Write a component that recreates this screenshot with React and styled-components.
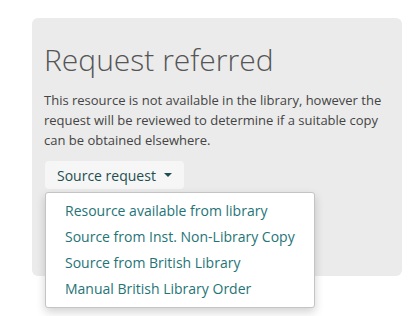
import React from 'react';
import styled, { createGlobalStyle } from 'styled-components';

const OPTIONS = [
  'Resource available from library',
  'Source from Inst. Non-Library Copy',
  'Source from British Library',
  'Manual British Library Order'
];

const GlobalStyle = createGlobalStyle`
  html, body {
    margin: 0;
    background: #fff;
    font-family: "Open Sans", "Liberation Sans", sans-serif;
  }
`;

function App() {
  return (
    <>
      <GlobalStyle />
      <Page>
        <Panel>
          <Title>Request referred</Title>
          <Lead>
            This resource is not available in the library, however the request will be
            reviewed to determine if a suitable copy can be obtained elsewhere.
          </Lead>
          <Dropdown>
            <Toggle type="button">
              Source request
              <Caret />
            </Toggle>
            <Menu>
              { OPTIONS.map((label, idx) => (
                <MenuItem key={ `opt-${ idx }` } href="#">{ label }</MenuItem>
              )) }
            </Menu>
          </Dropdown>
        </Panel>
      </Page>
    </>
  );
}

const Page = styled.main`
  min-height: 316px;
  box-sizing: border-box;
  padding: 18px 10px 0 32px;
`;

const Panel = styled.section`
  width: 370px;
  height: 258px;
  box-sizing: border-box;
  padding: 20px 12px 0 12px;
  background: #ebebeb;
  border-radius: 6px;
`;

const Title = styled.h1`
  margin: 0;
  font-size: 30px;
  font-weight: 300;
  line-height: 44px;
  color: #555;
`;

const Lead = styled.p`
  margin: 8px 0 11px 0;
  font-size: 13px;
  line-height: 20px;
  color: #444;
`;

const Dropdown = styled.div`
  position: relative;
  z-index: 2;
  display: inline-block;
`;

const Toggle = styled.button`
  display: inline-flex;
  align-items: center;
  gap: 8px;
  height: 28px;
  padding: 0 12px;
  margin-left: 1px;
  border: none;
  border-radius: 4px;
  background: #f6f6f6;
  font-family: inherit;
  font-size: 14px;
  color: #1d4f50;
`;

const Caret = styled.span`
  width: 0;
  height: 0;
  border-left: 4px solid transparent;
  border-right: 4px solid transparent;
  border-top: 4px solid #1d4f50;
`;

const Menu = styled.div`
  position: absolute;
  top: 31px;
  left: 1px;
  width: 270px;
  box-sizing: border-box;
  padding: 5px 0;
  background: #fff;
  border: 1px solid #c4c4c4;
  border-radius: 3px;
  box-shadow: 0 4px 10px rgba(0, 0, 0, 0.18);
  display: flex;
  flex-direction: column;
`;

const MenuItem = styled.a`
  display: block;
  padding: 0 19px;
  line-height: 26px;
  font-size: 14px;
  color: #1f7477;
  text-decoration: none;
  white-space: nowrap;
`;

export default App;
